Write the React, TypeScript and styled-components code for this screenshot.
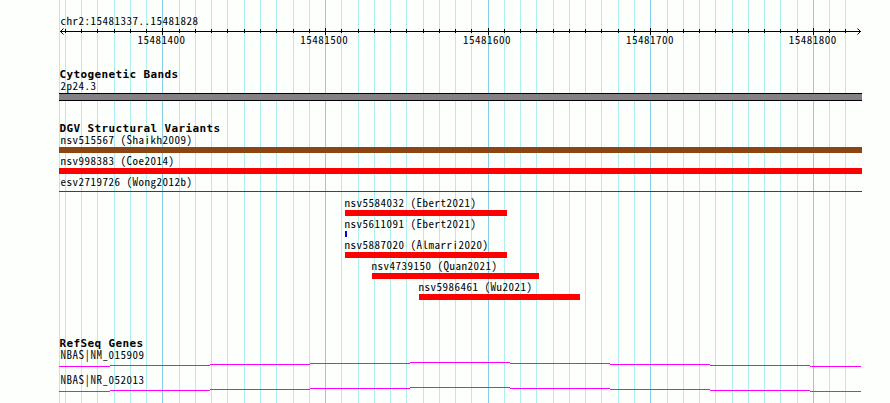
import React from "react";
import styled, { createGlobalStyle } from "styled-components";

const GlobalStyle = createGlobalStyle`
  * { box-sizing: border-box; }
  body { margin: 0; background: #fdfffc; }
`;

const LEFT = 59;
const majors = [162, 325, 488, 650, 813];
const minors = [
  65, 81, 97, 114, 130, 146, 179, 195, 211, 227, 244, 260, 276, 293, 309, 341,
  358, 374, 390, 406, 423, 439, 455, 471, 504, 520, 536, 553, 569, 585, 601,
  618, 634, 667, 683, 699, 715, 732, 748, 764, 780, 797, 829, 845,
];

const Browser = styled.main`
  position: relative;
  width: 890px;
  height: 403px;
  padding: 15px 0 0 59px;
  overflow: hidden;
  background: #fdfffc;
  color: #000;
  font-family: "Noto Sans CJK JP", "DejaVu Sans Mono", monospace;
  font-feature-settings: "hwid" 1;
  font-kerning: none;
`;

const GridLines = styled.svg`
  position: absolute;
  inset: 0;
  width: 890px;
  height: 403px;
`;

const Panel = styled.div`
  position: relative;
  display: flex;
  flex-direction: column;
  width: 803px;
`;

const Label = styled.div<{ $shift?: number }>`
  height: 12px;
  padding-left: 1.5px;
  margin-left: ${(p) => p.$shift ?? 0}px;
  font-size: 11px;
  letter-spacing: 0.5px;
  line-height: 9px;
  white-space: pre;
`;

const Region = styled(Label)`
  line-height: 11px;
`;

const Axis = styled.svg`
  display: block;
  width: 803px;
  height: 7px;
  margin-top: 1px;
`;

const AxisLabels = styled.div`
  display: flex;
  gap: 114.8px;
  height: 12px;
  padding-left: 78.5px;
`;

const AxisLabel = styled(Label)`
  width: 48px;
  padding-left: 0;
  line-height: 8px;
`;

const Track = styled.section<{ $gap: number }>`
  display: flex;
  flex-direction: column;
  margin-top: ${(p) => p.$gap}px;
`;

const Title = styled.h2`
  height: 13px;
  margin: 0;
  padding-left: 0.5px;
  font-family: "DejaVu Sans Mono", monospace;
  font-size: 11px;
  font-weight: 700;
  letter-spacing: 0.378px;
  line-height: 13px;
  white-space: pre;
`;

const Band = styled.div`
  height: 8px;
  border: solid #000;
  border-width: 1px 0;
  background: #848084;
`;

const Variant = styled.div`
  display: flex;
  flex-direction: column;
  height: 21px;
`;

const Bar = styled.div<{ $x: number; $w: number; $color: string; $thin?: boolean }>`
  width: ${(p) => p.$w}px;
  height: ${(p) => (p.$thin ? 1 : 6)}px;
  margin: ${(p) => (p.$thin ? 2 : 0)}px 0 0 ${(p) => p.$x}px;
  background: ${(p) => p.$color};
`;

const Gene = styled.div`
  height: 25px;
`;

const Intron = styled.svg`
  display: block;
  width: 802px;
  height: 5px;
`;

const variants = [
  { name: "nsv515567 (Shaikh2009)", x: 0, w: 803, color: "#8b4513" },
  { name: "nsv998383 (Coe2014)", x: 0, w: 803, color: "#ff0000" },
  { name: "esv2719726 (Wong2012b)", x: 0, w: 803, color: "#dc0000", thin: true },
  { name: "nsv5584032 (Ebert2021)", x: 286, w: 162, color: "#ff0000" },
  { name: "nsv5611091 (Ebert2021)", x: 286, w: 2, color: "#0000ff" },
  { name: "nsv5887020 (Almarri2020)", x: 286, w: 162, color: "#ff0000" },
  { name: "nsv4739150 (Quan2021)", x: 313, w: 167, color: "#ff0000" },
  { name: "nsv5986461 (Wu2021)", x: 360, w: 161, color: "#ff0000" },
];

const intronSteps = [
  { x: 0, y: 4, w: 51 },
  { x: 51, y: 3, w: 100 },
  { x: 151, y: 2, w: 100 },
  { x: 251, y: 1, w: 100 },
  { x: 351, y: 0, w: 100 },
  { x: 451, y: 1, w: 100 },
  { x: 551, y: 2, w: 100 },
  { x: 651, y: 3, w: 100 },
  { x: 751, y: 4, w: 51 },
];

export default function App() {
  return (
    <>
      <GlobalStyle />
      <Browser>
        <GridLines viewBox="0 0 890 403" shapeRendering="crispEdges">
          {[LEFT, ...minors].map((x) => (
            <rect key={x} x={x} y={0} width={1} height={403} fill="#afeeee" />
          ))}
          {majors.map((x) => (
            <rect key={x} x={x} y={0} width={1} height={403} fill="#87ceeb" />
          ))}
        </GridLines>
        <Panel>
          <Region>chr2:15481337..15481828</Region>
          <Axis viewBox="59 28 803 7">
            <g shapeRendering="crispEdges">
              <rect x={60} y={31} width={801} height={1} />
              {minors.map((x) => (
                <rect key={x} x={x} y={29} width={1} height={4} />
              ))}
              {majors.map((x) => (
                <rect key={x} x={x} y={28} width={1} height={7} />
              ))}
            </g>
            <path d="M63.5 28.5L60.5 31.5L63.5 34.5M857.5 28.5L860.5 31.5L857.5 34.5" fill="none" stroke="#000" />
          </Axis>
          <AxisLabels>
            {[400, 500, 600, 700, 800].map((n) => (
              <AxisLabel key={n}>{`15481${n}`}</AxisLabel>
            ))}
          </AxisLabels>
          <Track $gap={21}>
            <Title>Cytogenetic Bands</Title>
            <Label>2p24.3</Label>
            <Band />
          </Track>
          <Track $gap={21}>
            <Title>DGV Structural Variants</Title>
            {variants.map((v) => (
              <Variant key={v.name}>
                <Label $shift={v.x && v.x - 2}>{v.name}</Label>
                <Bar $x={v.x} $w={v.w} $color={v.color} $thin={v.thin} />
              </Variant>
            ))}
          </Track>
          <Track $gap={34}>
            <Title>RefSeq Genes</Title>
            {["NBAS|NM_015909", "NBAS|NR_052013"].map((name) => (
              <Gene key={name}>
                <Label>{name}</Label>
                <Intron viewBox="0 0 802 5" shapeRendering="crispEdges">
                  {intronSteps.map((s) => (
                    <rect key={s.x} x={s.x} y={s.y} width={s.w} height={1} fill="#ff00ff" />
                  ))}
                </Intron>
              </Gene>
            ))}
          </Track>
        </Panel>
      </Browser>
    </>
  );
}
